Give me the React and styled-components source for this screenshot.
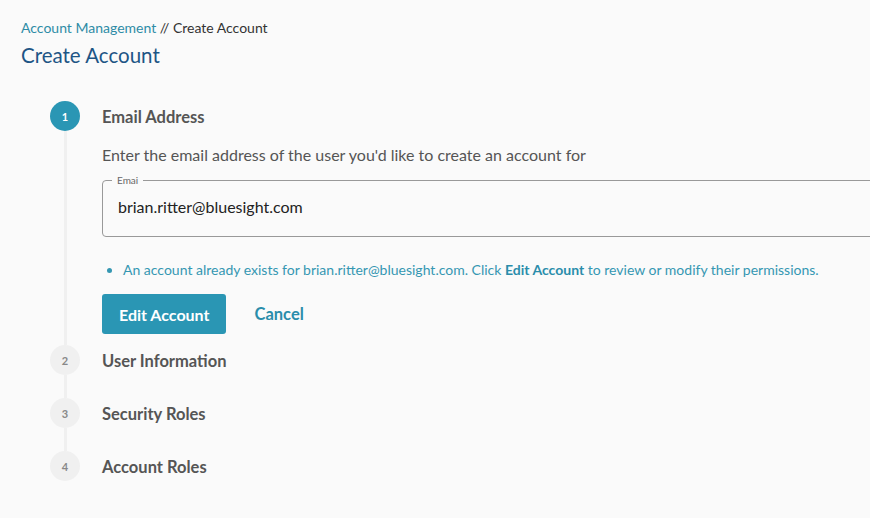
import React from 'react';
import styled, {createGlobalStyle} from "styled-components";

const GlobalStyle = createGlobalStyle`
body {
  margin: 0;
  background: #fafafa;
  font-family: Lato, "Open Sans", sans-serif;
  overflow: hidden;
}
`;

const steps = [
    {n: 1, title: 'Email Address', active: true},
    {n: 2, title: 'User Information'},
    {n: 3, title: 'Security Roles'},
    {n: 4, title: 'Account Roles'},
];

const EmailStep = () => (
    <StepBody>
        <Description>Enter the email address of the user you'd like to create an account for</Description>
        <Field>
            <legend>Emai</legend>
            <FieldValue>brian.ritter@bluesight.com</FieldValue>
        </Field>
        <Messages>
            <li>
                An account already exists for brian.ritter@bluesight.com. Click <b>Edit Account</b> to review or modify their permissions.
            </li>
        </Messages>
        <Actions>
            <PrimaryButton>Edit Account</PrimaryButton>
            <TextButton>Cancel</TextButton>
        </Actions>
    </StepBody>
);

const App = () => {
    return (
        <>
            <GlobalStyle/>
            <Page>
                <Breadcrumb>
                    <a>Account Management</a> // Create Account
                </Breadcrumb>
                <Title>Create Account</Title>

                <Stepper>
                    {steps.map((step, i) => (
                        <Step key={step.n} last={i === steps.length - 1} active={step.active}>
                            <StepHeader>
                                <Badge active={step.active}>{step.n}</Badge>
                                <StepTitle>{step.title}</StepTitle>
                            </StepHeader>
                            {step.active && <EmailStep/>}
                        </Step>
                    ))}
                </Stepper>
            </Page>
        </>
    );
};

const Page = styled.div`
padding: 19px 0 0 21px;
width: 900px;
`;

const Breadcrumb = styled.div`
font-size: 14px;
color: #333;
line-height: 18px;

a {
  color: #2e8ca6;
}
`;

const Title = styled.h1`
margin: 6px 0 0;
font-size: 20.5px;
font-weight: 400;
color: #1d5585;
line-height: 24px;
`;

const Stepper = styled.div`
margin: 34px 0 0 29px;
`;

const Step = styled.div`
position: relative;
padding-bottom: ${p => p.last ? 0 : p.active ? 11 : 23}px;

&::before {
  content: '';
  display: ${p => p.last ? 'none' : 'block'};
  position: absolute;
  left: 14px;
  top: 30px;
  bottom: 0;
  width: 3px;
  background: #f0f0f0;
}
`;

const StepHeader = styled.div`
display: flex;
align-items: center;
gap: 22px;
height: 30px;
`;

const Badge = styled.div`
width: 30px;
height: 30px;
border-radius: 50%;
display: flex;
align-items: center;
justify-content: center;
font-size: 11px;
font-weight: 700;
background: ${p => p.active ? '#2a96b4' : '#f0f0f0'};
color: ${p => p.active ? '#fff' : '#888'};
`;

const StepTitle = styled.div`
font-size: 16.5px;
font-weight: 700;
color: #555;
margin-top: 2px;
`;

const StepBody = styled.div`
padding: 14px 0 0 52px;
`;

const Description = styled.div`
font-size: 16px;
color: #555;
line-height: 20px;
`;

const Field = styled.fieldset`
margin: 10px 0 0;
padding: 0 15px;
width: 820px;
height: 62px;
box-sizing: border-box;
border: 1px solid #999;
border-radius: 4px;

legend {
  font-size: 10px;
  color: #666;
  padding: 0 5px;
  margin-left: -6px;
  line-height: 10px;
}
`;

const FieldValue = styled.div`
font-size: 16px;
color: #222;
line-height: 20px;
margin-top: 12px;
`;

const Messages = styled.ul`
margin: 24px 0 0;
padding-left: 21px;
font-size: 14px;
color: #3597b2;
line-height: 18px;

b {
  color: #2a8dab;
}
`;

const Actions = styled.div`
display: flex;
align-items: center;
gap: 28px;
margin-top: 15px;
`;

const PrimaryButton = styled.button`
font-family: inherit;
font-size: 16px;
font-weight: 700;
color: #fff;
background: #2a96b4;
border: none;
border-radius: 3px;
height: 40px;
padding: 0 17px;
`;

const TextButton = styled.button`
font-family: inherit;
font-size: 16.5px;
font-weight: 700;
color: #2a8dab;
background: none;
border: none;
padding: 0;
`;

export default App;
